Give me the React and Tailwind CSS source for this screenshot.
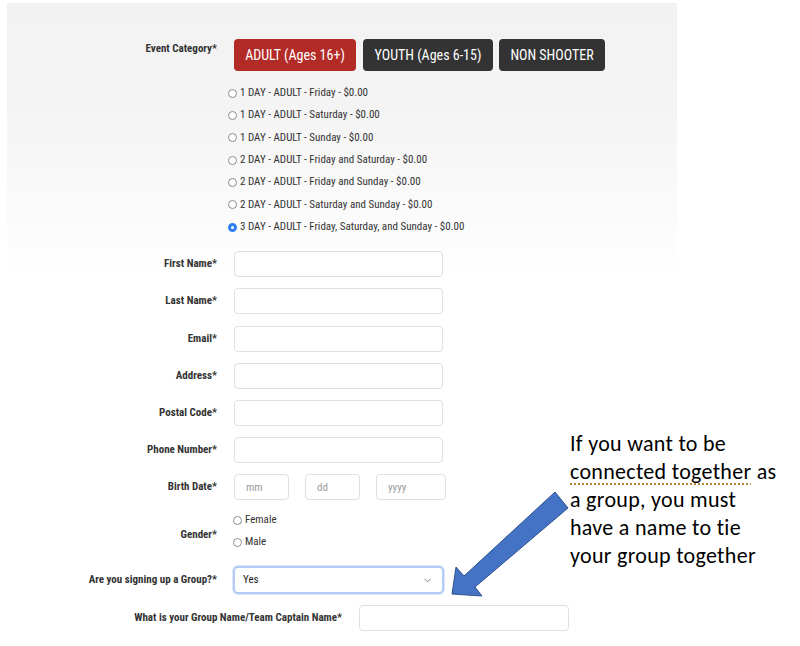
import { ChevronDown } from 'lucide-react'

const tickets = [
  '1 DAY - ADULT - Friday - $0.00',
  '1 DAY - ADULT - Saturday - $0.00',
  '1 DAY - ADULT - Sunday - $0.00',
  '2 DAY - ADULT - Friday and Saturday - $0.00',
  '2 DAY - ADULT - Friday and Sunday - $0.00',
  '2 DAY - ADULT - Saturday and Sunday - $0.00',
  '3 DAY - ADULT - Friday, Saturday, and Sunday - $0.00',
]

const fields = ['First Name*', 'Last Name*', 'Email*', 'Address*', 'Postal Code*', 'Phone Number*']

function Radio({ checked, name }) {
  return (
    <input
      type="radio"
      name={name}
      defaultChecked={checked}
      className="appearance-none w-[9px] h-[9px] rounded-full border border-[#8c8c8c] bg-white checked:border-[3px] checked:border-[#2f7cf4] m-0 shrink-0"
    />
  )
}

function Label({ children, width = 'w-[210px]' }) {
  return (
    <div className={`${width} shrink-0 text-right text-[11px] leading-[14px] font-bold text-[#333]`}>
      {children}
    </div>
  )
}

export default function App() {
  return (
    <div className="relative w-[800px] h-[646px] overflow-hidden bg-white font-['Roboto_Condensed','Liberation_Sans_Narrow','DejaVu_Sans_Condensed',sans-serif]">
      <div className="pt-[3px] pl-[7px]">
        <div className="w-[670px] h-[643px] pt-[36px] bg-[linear-gradient(180deg,#f2f2f2_0px,#f4f4f4_110px,#ffffff_275px)]">
          {/* event category */}
          <div className="flex">
            <div className="pt-[3px]">
              <Label>Event Category*</Label>
            </div>
            <div className="pl-[11px]">
              <div className="ml-[6px] flex gap-[7px] text-[14px] text-white">
                <button className="w-[122px] h-[32px] rounded-[4px] bg-[#b32b27]">ADULT (Ages 16+)</button>
                <button className="w-[130px] h-[32px] rounded-[4px] bg-[#333333]">YOUTH (Ages 6-15)</button>
                <button className="w-[106px] h-[32px] rounded-[4px] bg-[#333333] -ml-px">NON SHOOTER</button>
              </div>
              <div className="mt-[11px]">
                {tickets.map((t, i) => (
                  <label key={t} className="flex items-center gap-[3px] h-[22.33px] text-[11px] text-[#333]">
                    <Radio name="ticket" checked={i === tickets.length - 1} />
                    <span>{t}</span>
                  </label>
                ))}
              </div>
            </div>
          </div>

          {/* contact fields */}
          <div className="mt-[13px]">
            {fields.map((f) => (
              <div key={f} className="flex items-center mb-[11.2px]">
                <Label>{f}</Label>
                <input className="ml-[17px] w-[209px] h-[26px] rounded-[4px] border border-[#e0e0e0] bg-white" />
              </div>
            ))}
            <div className="flex items-center">
              <Label>Birth Date*</Label>
              <div className="ml-[17px] flex text-[11px]">
                <input placeholder="mm" className="w-[55px] h-[26px] rounded-[4px] border border-[#e0e0e0] bg-white pl-[11px] placeholder:text-[#9a9a9a]" />
                <input placeholder="dd" className="ml-[16px] w-[55px] h-[26px] rounded-[4px] border border-[#e0e0e0] bg-white pl-[11px] placeholder:text-[#9a9a9a]" />
                <input placeholder="yyyy" className="ml-[16px] w-[70px] h-[26px] rounded-[4px] border border-[#e0e0e0] bg-white pl-[11px] placeholder:text-[#9a9a9a]" />
              </div>
            </div>
          </div>

          {/* gender */}
          <div className="flex mt-[9px]">
            <div className="mt-[19px]">
              <Label>Gender*</Label>
            </div>
            <div className="ml-[16px]">
              {['Female', 'Male'].map((g) => (
                <label key={g} className="flex items-center gap-[3px] h-[22px] text-[11px] text-[#333]">
                  <Radio name="gender" />
                  <span>{g}</span>
                </label>
              ))}
            </div>
          </div>

          {/* group */}
          <div className="flex items-center mt-[13px]">
            <Label>Are you signing up a Group?*</Label>
            <div className="ml-[16px] w-[211px] h-[28px] rounded-[5px] border-2 border-[#b4cbf7] bg-white shadow-[0_0_0_1px_#dbe6fc] flex items-center justify-between pl-[8px] pr-[9px] text-[11px] text-[#222]">
              <span>Yes</span>
              <ChevronDown size={11} strokeWidth={1.6} color="#555" />
            </div>
          </div>
          <div className="flex items-center mt-[11px]">
            <Label width="w-[335px]">What is your Group Name/Team Captain Name*</Label>
            <input className="ml-[17px] w-[210px] h-[26px] rounded-[4px] border border-[#e0e0e0] bg-white" />
          </div>
        </div>
      </div>

      {/* annotation arrow */}
      <svg className="absolute left-0 top-0 pointer-events-none" width="800" height="646" viewBox="0 0 800 646">
        <polygon
          points="555,492 568,508 475,587 482,596 452,594 456,567 464,576"
          fill="#4472c4"
          stroke="#2f528f"
          strokeWidth="1"
          strokeLinejoin="miter"
        />
      </svg>

      {/* annotation note */}
      <div className="absolute left-[570px] top-[430px] text-[22px] leading-[28px] tracking-[0.3px] text-black font-['Carlito','Lato',sans-serif]">
        <div>If you want to be</div>
        <div>
          <span className="underline decoration-dotted decoration-[#b5873a] decoration-[1.5px] underline-offset-[4px]">connected together</span> as
        </div>
        <div>a group, you must</div>
        <div>have a name to tie</div>
        <div>your group together</div>
      </div>
    </div>
  )
}
